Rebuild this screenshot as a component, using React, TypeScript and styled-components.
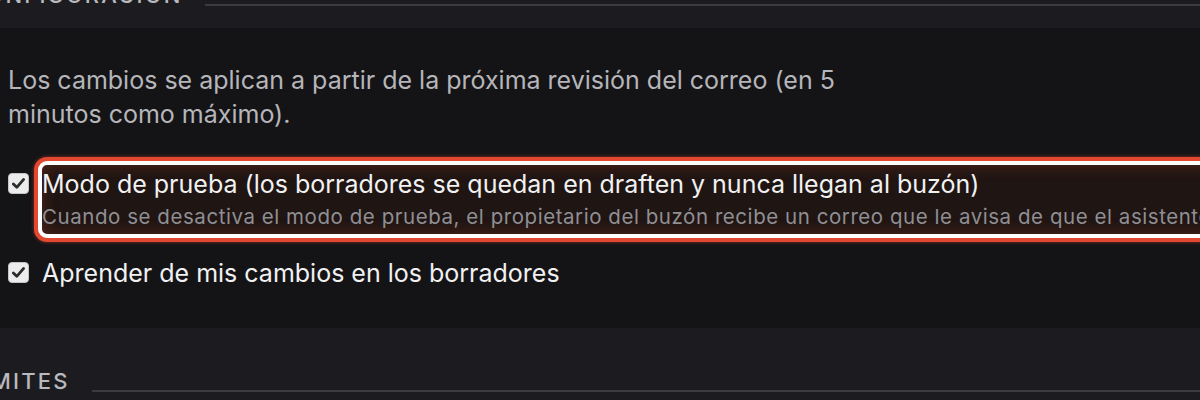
import React from "react";
import styled, { createGlobalStyle } from "styled-components";

const Global = createGlobalStyle`
  html, body { margin: 0; padding: 0; background: #1c1c20; }
  body { font-family: Inter, "Noto Sans", "Liberation Sans", sans-serif; -webkit-font-smoothing: antialiased; }
`;

const Page = styled.div`
  width: 1200px;
  height: 400px;
  overflow: hidden;
  background: #1c1c20;
`;

const SectionHeader = styled.div<{ $top: number }>`
  display: flex;
  align-items: flex-end;
  gap: 22px;
  margin-left: -32px;
  margin-top: ${(p) => p.$top}px;
`;

const SectionTitle = styled.h2`
  margin: 0;
  font-size: 22px;
  line-height: 26px;
  font-weight: 500;
  letter-spacing: 2.2px;
  text-transform: uppercase;
  color: #b9b9be;
  white-space: nowrap;
`;

const Rule = styled.div`
  flex: 1;
  height: 2px;
  background: #3a3a3f;
  margin-bottom: 2px;
`;

const Panel = styled.section`
  margin-top: 20px;
  background: #141417;
  padding: 35px 0 39px 8px;
  display: flex;
  flex-direction: column;
`;

const Intro = styled.p`
  margin: 0;
  max-width: 860px;
  font-size: 25px;
  line-height: 34px;
  color: #b6b6ba;
`;

const OptionRow = styled.label<{ $gap: number }>`
  display: flex;
  align-items: flex-start;
  gap: 13px;
  margin-top: ${(p) => p.$gap}px;
`;

const Box = styled.span`
  flex: none;
  width: 21px;
  height: 21px;
  margin-top: 5px;
  border-radius: 4px;
  background: #ececed;
  border: 1px solid #c4c4c6;
  box-sizing: border-box;
  display: flex;
  align-items: center;
  justify-content: center;
`;

const OptionText = styled.div<{ $highlight?: boolean }>`
  position: relative;
  isolation: isolate;
  flex: 1;
  min-width: 0;
  ${(p) =>
    p.$highlight
      ? `
    &::before {
      content: "";
      position: absolute;
      top: -7px;
      bottom: -6px;
      left: -4px;
      right: -60px;
      border: 4px solid #ffffff;
      border-radius: 9px;
      box-shadow: 0 0 0 4px #e2472f, 0 0 3px 5px rgba(226, 71, 47, 0.35), inset 0 0 16px rgba(214, 78, 50, 0.3);
      background: #1f1513;
      z-index: -1;
    }
  `
      : ""}
`;

const OptionTitle = styled.div`
  font-size: 25px;
  line-height: 32px;
  color: #f1f1f2;
  white-space: nowrap;
`;

const OptionHint = styled.div`
  margin-top: 1.5px;
  font-size: 20.5px;
  line-height: 30px;
  letter-spacing: 0.55px;
  color: #8f8f94;
  white-space: nowrap;
`;

const Check = () => (
  <Box>
    <svg width="15" height="15" viewBox="0 0 14 14">
      <polyline
        points="2.2,7.4 5.4,10.6 11.8,3.2"
        fill="none"
        stroke="#2c2c2e"
        strokeWidth="2.6"
        strokeLinecap="round"
        strokeLinejoin="round"
      />
    </svg>
  </Box>
);

export default function App() {
  return (
    <Page>
      <Global />
      <SectionHeader $top={-18}>
        <SectionTitle>Configuración</SectionTitle>
        <Rule />
      </SectionHeader>
      <Panel>
        <Intro>
          Los cambios se aplican a partir de la próxima revisión del correo (en 5 minutos como máximo).
        </Intro>
        <OptionRow $gap={37}>
          <Check />
          <OptionText $highlight>
            <OptionTitle>
              Modo de prueba (los borradores se quedan en draften y nunca llegan al buzón)
            </OptionTitle>
            <OptionHint>
              Cuando se desactiva el modo de prueba, el propietario del buzón recibe un correo que le avisa de que el asistente está activo.
            </OptionHint>
          </OptionText>
        </OptionRow>
        <OptionRow $gap={25}>
          <Check />
          <OptionText>
            <OptionTitle>Aprender de mis cambios en los borradores</OptionTitle>
          </OptionText>
        </OptionRow>
      </Panel>
      <SectionHeader $top={40}>
        <SectionTitle>Límites</SectionTitle>
        <Rule />
      </SectionHeader>
    </Page>
  );
}
